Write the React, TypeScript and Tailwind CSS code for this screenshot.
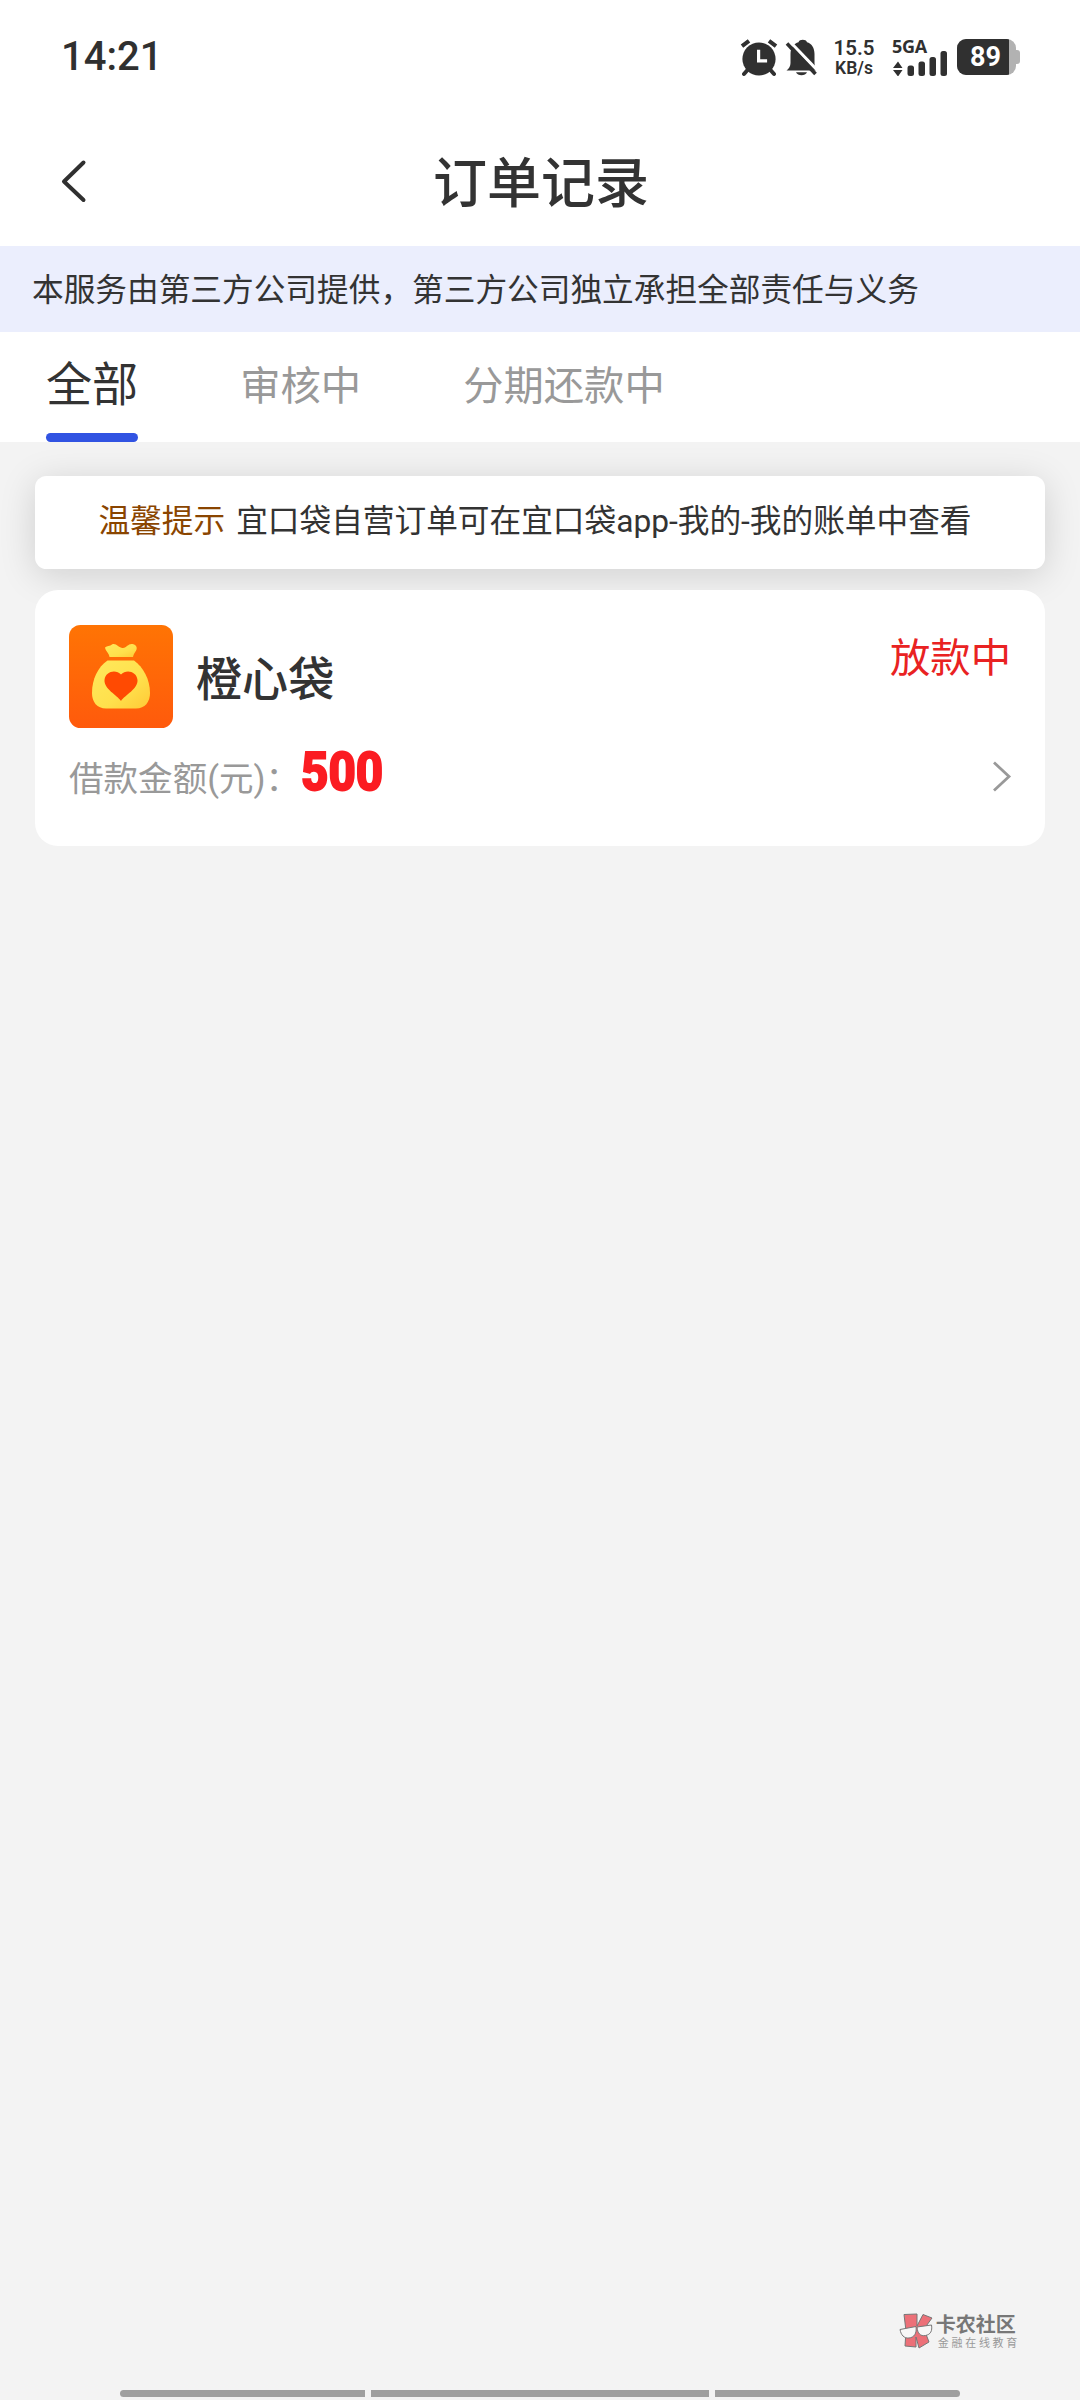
const sans = "font-['Roboto','Noto_Sans_CJK_SC',sans-serif]";

function AlarmIcon() {
  return (
    <svg className="h-[38px] w-[38px]" viewBox="0 0 38 38" fill="none">
      <circle cx="19" cy="20" r="16.6" fill="#303030" />
      <path d="M2 7.200 9 1.800M36 7.200 29 1.800" stroke="#303030" strokeWidth="4" />
      <path d="M7.500 31 4 35M30.500 31 34 35" stroke="#303030" strokeWidth="4" strokeLinecap="round" />
      <path d="M18.600 10.800v11h8.500" stroke="#fff" strokeWidth="3.200" />
    </svg>
  );
}

function MutedBellIcon() {
  return (
    <svg className="h-[38px] w-[34px]" viewBox="0 0 34 38" fill="none">
      <path d="M1.500 31.500c2.500-2 4-4.200 4-7.500v-9C5.500 8.500 9 4.500 13.500 3.200 14.500 0 21 0 22 3.200 26.500 4.500 29.500 8.500 29.500 15v9c0 3.300 1 5.500 3 7.500z" fill="#303030" />
      <path d="M11 33.300h11c-1.500 4-9.500 4-11 0z" fill="#303030" />
      <path d="M4.800 2.500 33.500 32.500" stroke="#fff" strokeWidth="3" />
      <path d="M2 4.500 30.500 35" stroke="#303030" strokeWidth="3.600" />
    </svg>
  );
}

function Signal() {
  return (
    <div className="ml-[17px] flex h-[38px] w-[56px] flex-col">
      <span className="font-['Open_Sans',sans-serif] text-[18px] leading-[14px] font-bold tracking-[-0.3px]">5GA</span>
      <svg className="-mt-[2px] h-[25px] w-[56px] shrink-0" viewBox="0 0 56 25" fill="#303030">
        <path d="M1 17 6 10.500 10.500 17zM1 19h9.500L6 25.500z" />
        <rect x="15.500" y="14.500" width="6.500" height="10.500" rx="2.500" />
        <rect x="26.500" y="10.500" width="6.500" height="14.500" rx="2.500" />
        <rect x="37.500" y="6" width="6.500" height="19" rx="2.500" />
        <rect x="48.500" y="0" width="6.500" height="25" rx="2.500" />
      </svg>
    </div>
  );
}

function Battery() {
  return (
    <div className="ml-[9px] flex items-center">
      <div className="flex h-[36px] w-[59px] overflow-hidden rounded-[9px] bg-[#b2b2b2]">
        <div className="flex w-[52px] items-center justify-center bg-[#303030] pl-[5px] text-[27px] leading-[36px] font-bold text-white">89</div>
      </div>
      <div className="h-[14px] w-[4px] rounded-r-[3px] bg-[#b2b2b2]" />
    </div>
  );
}

function StatusBar() {
  return (
    <div className="flex h-[112px] items-start justify-between pr-[60px] pl-[61px] text-[#303030]">
      <span className="mt-[33px] text-[40px] leading-[48px] font-medium">14:21</span>
      <div className="mt-[39px] flex items-start">
        <AlarmIcon />
        <div className="ml-[7px]"><MutedBellIcon /></div>
        <div className="ml-[14px] flex w-[42px] flex-col text-center font-semibold">
          <span className="mt-[-1px] text-[20.500px] leading-[20px]">15.5</span>
          <span className="mt-[1px] text-[17.500px] leading-[18px]">KB/s</span>
        </div>
        <Signal />
        <Battery />
      </div>
    </div>
  );
}

function MoneyBag() {
  return (
    <svg className="h-[103px] w-[104px]" viewBox="0 0 104 103">
      <defs>
        <linearGradient id="tile" x1="0" y1="0" x2="0" y2="1">
          <stop stopColor="#ff7404" />
          <stop offset="1" stopColor="#ff5a0c" />
        </linearGradient>
        <linearGradient id="bag" x1="0" y1="0" x2="1" y2="1">
          <stop stopColor="#ffe95c" />
          <stop offset=".6" stopColor="#ffe04c" />
          <stop offset="1" stopColor="#ffc936" />
        </linearGradient>
      </defs>
      <rect width="104" height="103" rx="11.500" fill="url(#tile)" />
      <path d="M40.500 32 C40 28 36.500 26 36 22.500 C38 20.500 41 21.500 43 19.500 C47 17.500 50 23.500 54 23 C58 22.500 59 18.500 63.500 19 C68.500 20 68.500 24 66.500 26.500 C65 28.500 64.500 30 64 32 Z" fill="url(#bag)" />
      <path d="M38.500 35.500 H65 C74 42 81 54 81 68 C81 77 76 83.500 67 83.500 H37 C28 83.500 23 77 23 68 C23 54 29 42 38.500 35.500 Z" fill="url(#bag)" />
      <path d="M52 76 C48 70 35 64 35.500 55 C36.500 46 47 44 52 49.500 C57 44 67.500 46 68.500 55 C69 64 56 70 52 76 Z" fill="#ff4a02" />
    </svg>
  );
}

function OrderCard() {
  return (
    <section className="relative mx-[35px] mt-[21px] h-[256px] rounded-[23px] bg-white px-[34px] pt-[35px]">
      <div className="flex items-start">
        <MoneyBag />
        <h2 className="mt-[23px] ml-[23px] text-[46.080px] leading-[64px] font-medium text-[#333]">橙心袋</h2>
        <span className="mt-[9px] ml-auto text-[40.320px] leading-[50px] text-[#e92222]">放款中</span>
      </div>
      <div className="mt-[20px] flex items-start">
        <span className="mt-[7px] text-[34.560px] leading-[48px] text-[#999]">借款金额(元)：</span>
        <span className="mt-[-1px] ml-[1px] inline-block origin-left scale-x-[0.880] text-[54px] leading-[50px] font-extrabold text-[#fb1c22] [-webkit-text-stroke:2px_#fb1c22]">500</span>
        <svg className="mt-[13px] mr-[-1px] ml-auto h-[31px] w-[20px]" viewBox="0 0 20 31" fill="none">
          <path d="M2 1.500 17 15.500 2 29.500" stroke="#999" strokeWidth="2.800" />
        </svg>
      </div>
    </section>
  );
}

function Watermark() {
  return (
    <div className="mr-[60px] ml-auto flex h-[38px] items-start">
      <svg className="h-[37px] w-[35px]" viewBox="0 0 35 37">
        <g stroke="#777" strokeWidth="1">
          <path d="M5 1.500 18 1 18 13 24 1.500 33 5 25 16 30 29 20 35 17 24 17 34 6 33 7 18z" fill="#ec7078" />
          <path d="M1 16.500 17 13.500c1 7-2 11-7 11.500s-8-3-9-8.500zM18 14l14.500-2c1 6-1 9.500-6 10.500s-8-2-8.500-8.500z" fill="#f7f7f7" />
        </g>
      </svg>
      <div className="ml-[2px] flex flex-col">
        <span className="text-[20px] leading-[25px] font-bold text-[#777]">卡农社区</span>
        <span className="ml-[2px] h-[12px] text-[11px] leading-[12px] tracking-[2.700px] whitespace-nowrap text-[#999]">金融在线教育</span>
      </div>
    </div>
  );
}

export default function App() {
  return (
    <main className={`flex h-[2400px] w-[1080px] flex-col overflow-hidden bg-[#f3f3f3] ${sans}`}>
      <header className="h-[246px] bg-white">
        <StatusBar />
        <div className="grid h-[134px] grid-cols-[200px_1fr_200px] items-start">
          <svg className="mt-[47px] ml-[60px] h-[44px] w-[28px]" viewBox="0 0 28 44" fill="none">
            <path d="M23.500 3.500 4 22.500 23.500 41" stroke="#303030" strokeWidth="4" strokeLinecap="round" strokeLinejoin="round" />
          </svg>
          <h1 className="mt-[37px] pl-[2px] text-center text-[54px] leading-[72px] font-medium text-[#333]">订单记录</h1>
        </div>
      </header>
      <p className="h-[86px] bg-[#ebeefd] pl-[32px] text-[31.680px] leading-[90px] text-[#333]">
        本服务由第三方公司提供，第三方公司独立承担全部责任与义务
      </p>
      <nav className="flex h-[110px] bg-white pl-[46px] text-[40.320px] leading-[110px] text-[#999]">
        <div className="flex flex-col text-[46.080px] text-[#333]">
          <span className="h-[101px] leading-[106px]">全部</span>
          <i className="h-[9px] rounded-[4.500px] bg-[#3153e2]" />
        </div>
        <span className="ml-[102px]">审核中</span>
        <span className="ml-[102px]">分期还款中</span>
      </nav>
      <div className="mx-[35px] mt-[34px] flex h-[93px] shrink-0 justify-center rounded-[11.500px] bg-white pr-[10px] text-[31.680px] leading-[91px] text-[#333] shadow-[0_6px_36px_rgba(0,0,0,0.15)]">
        <span className="mr-[11px] text-[#8a4500]">温馨提示</span>
        <span>宜口袋自营订单可在宜口袋app-我的-我的账单中查看</span>
      </div>
      <OrderCard />
      <div className="mt-auto flex"><Watermark /></div>
      <div className="mt-[39px] mb-[3px] flex h-[7px] shrink-0 gap-[6px] px-[120px]">
        <i className="w-[245px] rounded-l-full bg-[#9f9f9f]" />
        <i className="flex-1 bg-[#9f9f9f]" />
        <i className="w-[245px] rounded-r-full bg-[#9f9f9f]" />
      </div>
    </main>
  );
}
